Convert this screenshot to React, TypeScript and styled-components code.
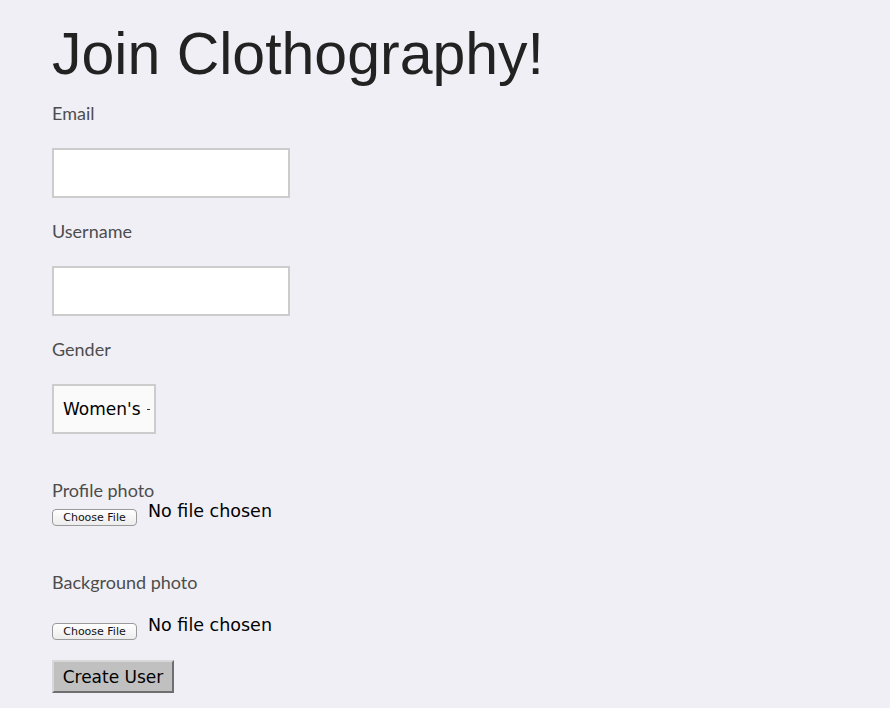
import React from "react";
import styled, { createGlobalStyle } from "styled-components";

const Global = createGlobalStyle`
  html, body { margin: 0; padding: 0; background: #f0eff5; }
  body { font-family: Lato, "Liberation Sans", sans-serif; }
`;

const Page = styled.main`
  padding: 15px 52px 0;
  min-height: 708px;
  box-sizing: border-box;
`;

const Title = styled.h1`
  margin: 0;
  font-family: "Liberation Sans", Arial, sans-serif;
  font-weight: 400;
  font-size: 59px;
  line-height: 78px;
  color: #222;
`;

const Form = styled.form`
  display: flex;
  flex-direction: column;
  align-items: flex-start;
`;

const Label = styled.label<{ $top: number; $bottom: number }>`
  display: block;
  margin-top: ${(p) => p.$top}px;
  margin-bottom: ${(p) => p.$bottom}px;
  font-family: Lato, "Open Sans", sans-serif;
  font-size: 18px;
  line-height: 20px;
  color: #4d4d4d;
`;

const TextInput = styled.input`
  box-sizing: border-box;
  width: 238px;
  height: 50px;
  margin: 0;
  border: 2px solid #cccccc;
  background: #fff;
  outline: none;
`;

const SelectBox = styled.div`
  position: relative;
  box-sizing: border-box;
  width: 104px;
  height: 50px;
  border: 2px solid #cccccc;
  background: #fafafa;
  overflow: hidden;
  &::after {
    content: "";
    position: absolute;
    right: 4px;
    top: 23px;
    width: 3px;
    height: 1px;
    background: #333;
  }
`;

const Select = styled.select`
  appearance: none;
  -webkit-appearance: none;
  border: none;
  background: transparent;
  width: 100%;
  height: 100%;
  padding: 0 0 0 9px;
  font-family: "DejaVu Sans", Verdana, sans-serif;
  font-size: 17px;
  color: #000;
  outline: none;
`;

const FileRow = styled.div<{ $bottom: number }>`
  display: flex;
  align-items: flex-start;
  gap: 11px;
  margin-bottom: ${(p) => p.$bottom}px;
`;

const ChooseButton = styled.button`
  box-sizing: border-box;
  width: 85px;
  height: 17px;
  margin-top: 9px;
  padding: 0;
  border: 1px solid #9a9a9a;
  border-radius: 4px;
  background: linear-gradient(#ffffff, #ececec);
  font-family: "DejaVu Sans", Verdana, sans-serif;
  font-size: 11px;
  line-height: 15px;
  color: #111;
`;

const NoFile = styled.span`
  font-family: "DejaVu Sans", Verdana, sans-serif;
  font-size: 17.5px;
  line-height: 22px;
  color: #000;
`;

const Submit = styled.button`
  box-sizing: border-box;
  width: 122px;
  height: 33px;
  padding: 0;
  background: #c0c0c0;
  border: 2px solid;
  border-color: #d8d8d8 #6e6e6e #6e6e6e #d8d8d8;
  font-family: "DejaVu Sans", Verdana, sans-serif;
  font-size: 17px;
  color: #000;
`;

export default function App() {
  return (
    <>
      <Global />
      <Page>
        <Title>Join Clothography!</Title>
        <Form onSubmit={(e) => e.preventDefault()}>
          <Label $top={10} $bottom={25} htmlFor="email">Email</Label>
          <TextInput id="email" type="text" />
          <Label $top={23} $bottom={25} htmlFor="username">Username</Label>
          <TextInput id="username" type="text" />
          <Label $top={23} $bottom={25} htmlFor="gender">Gender</Label>
          <SelectBox>
            <Select id="gender" defaultValue="w">
              <option value="w">Women's</option>
              <option value="m">Men's</option>
            </Select>
          </SelectBox>
          <Label $top={46} $bottom={0}>Profile photo</Label>
          <FileRow $bottom={46}>
            <ChooseButton type="button">Choose File</ChooseButton>
            <NoFile>No file chosen</NoFile>
          </FileRow>
          <Label $top={0} $bottom={22}>Background photo</Label>
          <FileRow $bottom={20}>
            <ChooseButton type="button">Choose File</ChooseButton>
            <NoFile>No file chosen</NoFile>
          </FileRow>
          <Submit type="submit">Create User</Submit>
        </Form>
      </Page>
    </>
  );
}
